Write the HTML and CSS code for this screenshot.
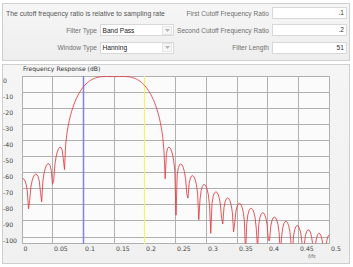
FILE: index.html
```html
<!DOCTYPE html>
<html>
<head>
<meta charset="utf-8">
<title>Filter Designer</title>
<link rel="stylesheet" href="styles.css">
</head>
<body>
<div class="settings">
  <div class="note">The cutoff frequency ratio is relative to sampling rate</div>
  <div class="lbl">First Cutoff Frequency Ratio</div>
  <div class="field">.1</div>

  <div class="lbl">Filter Type</div>
  <div class="select"><span class="val">Band Pass</span><span class="btn"><svg width="5" height="3" viewBox="0 0 5 3"><path d="M0 0H5L2.5 3Z" fill="#b4b4b4"/></svg></span></div>
  <div class="lbl">Second Cutoff Frequency Ratio</div>
  <div class="field">.2</div>

  <div class="lbl">Window Type</div>
  <div class="select"><span class="val">Hanning</span><span class="btn"><svg width="5" height="3" viewBox="0 0 5 3"><path d="M0 0H5L2.5 3Z" fill="#b4b4b4"/></svg></span></div>
  <div class="lbl">Filter Length</div>
  <div class="field">51</div>
</div>

<div class="chart">
  <div class="chart-title">Frequency Response (dB)</div>
  <svg class="plot" width="346" height="190" viewBox="3 73 346 190">
    <defs>
      <clipPath id="plotclip"><rect x="22" y="76" width="308" height="167.5"/></clipPath>
    </defs>
    <rect class="plot-bg" x="22" y="76" width="308" height="167.5"/>
    <g class="grid">
      <line x1="22" x2="330" y1="76.5" y2="76.5"/>
      <line x1="22" x2="330" y1="92.5" y2="92.5"/>
      <line x1="22" x2="330" y1="108.5" y2="108.5"/>
      <line x1="22" x2="330" y1="124.5" y2="124.5"/>
      <line x1="22" x2="330" y1="140.5" y2="140.5"/>
      <line x1="22" x2="330" y1="156.5" y2="156.5"/>
      <line x1="22" x2="330" y1="172.5" y2="172.5"/>
      <line x1="22" x2="330" y1="188.5" y2="188.5"/>
      <line x1="22" x2="330" y1="204.5" y2="204.5"/>
      <line x1="22" x2="330" y1="220.5" y2="220.5"/>
      <line x1="22" x2="330" y1="237.5" y2="237.5"/>
      <line x1="22" x2="330" y1="243.5" y2="243.5"/>
      <line x1="22.5" x2="22.5" y1="76" y2="244"/>
      <line x1="52.5" x2="52.5" y1="76" y2="244"/>
      <line x1="83.5" x2="83.5" y1="76" y2="244"/>
      <line x1="114.5" x2="114.5" y1="76" y2="244"/>
      <line x1="144.5" x2="144.5" y1="76" y2="244"/>
      <line x1="175.5" x2="175.5" y1="76" y2="244"/>
      <line x1="206.5" x2="206.5" y1="76" y2="244"/>
      <line x1="237.5" x2="237.5" y1="76" y2="244"/>
      <line x1="267.5" x2="267.5" y1="76" y2="244"/>
      <line x1="298.5" x2="298.5" y1="76" y2="244"/>
      <line x1="329.5" x2="329.5" y1="76" y2="244"/>
    </g>
    <line class="cut1" x1="83.5" x2="83.5" y1="76" y2="244"/>
    <line class="cut2" x1="144.5" x2="144.5" y1="76" y2="244"/>
    <polyline id="curve" class="curve" clip-path="url(#plotclip)" points=""/>
    <g class="ylabels">
      <text x="3" y="82.5">0</text>
      <text x="3" y="98.5">-10</text>
      <text x="3" y="114.5">-20</text>
      <text x="3" y="130.5">-30</text>
      <text x="3" y="146.5">-40</text>
      <text x="3" y="162.5">-50</text>
      <text x="3" y="178.5">-60</text>
      <text x="3" y="194.5">-70</text>
      <text x="3" y="210.5">-80</text>
      <text x="3" y="226.5">-90</text>
      <text x="3" y="243">-100</text>
    </g>
    <g class="xlabels">
      <text x="23.5" y="251">0</text>
      <text x="54" y="251">0.05</text>
      <text x="85" y="251">0.1</text>
      <text x="116" y="251">0.15</text>
      <text x="146" y="251">0.2</text>
      <text x="177" y="251">0.25</text>
      <text x="208" y="251">0.3</text>
      <text x="239" y="251">0.35</text>
      <text x="269" y="251">0.4</text>
      <text x="300" y="251">0.45</text>
      <text x="331" y="251">0.5</text>
    </g>
    <text class="unit" x="308" y="258">f/fs</text>
  </svg>
</div>
<script src="script.js"></script>
</body>
</html>
```

FILE: styles.css
```css
* { box-sizing: border-box; }
html, body { margin: 0; padding: 0; background: #ffffff; }
body {
  width: 353px;
  height: 267px;
  overflow: hidden;
  font-family: "Liberation Sans", Arial, sans-serif;
  font-size: 6.6px;
  color: #666;
}

.settings {
  margin: 3px 3px 0 2px;
  border: 1px solid #cfcfcf;
  background: linear-gradient(#f6f6f6, #eeeeee);
  padding: 3px 3px 6.4px 3px;
  display: grid;
  grid-template-columns: 91px 74px 1fr 75px;
  grid-template-rows: 12px 12px 12px;
  column-gap: 3px;
  row-gap: 5.3px;
  align-items: center;
}

.note {
  grid-column: 1 / 3;
  white-space: nowrap;
  color: #555;
  font-size: 6.85px;
}

.lbl {
  text-align: right;
  white-space: nowrap;
  color: #707070;
}

.field {
  height: 12px;
  background: #fff;
  border: 1px solid #d8d8d8;
  text-align: right;
  padding-right: 2px;
  line-height: 10px;
  color: #333;
}

.select {
  height: 12px;
  background: #fff;
  border: 1px solid #d8d8d8;
  display: flex;
  align-items: center;
  padding-left: 1.5px;
  color: #1a1a1a;
}
.select .val { flex: 1; white-space: nowrap; }
.select .btn {
  width: 10px;
  height: 9px;
  margin-right: 1px;
  border: 1px solid #e4e4e4;
  background: #f7f7f7;
  display: flex;
  align-items: center;
  justify-content: center;
}
.select .btn svg { display: block; }

.chart {
  margin: 3px 3px 0 2px;
  height: 200px;
  border: 1px solid #cfcfcf;
  background: linear-gradient(#f5f5f5, #f0f0f0);
}
.chart-title {
  height: 8px;
  line-height: 8px;
  padding-left: 20px;
  font-family: "DejaVu Sans", Verdana, sans-serif;
  font-size: 6.1px;
  color: #333;
}
.plot { display: block; }
.plot-bg { fill: #fbfbfb; }
.grid line { stroke: #b0b0b0; stroke-width: 1; }
.cut1 { stroke: #8080e6; stroke-width: 1.5; }
.cut2 { stroke: #f3f07a; stroke-width: 1.2; }
.curve { fill: none; stroke: #e23a40; stroke-width: 0.85; stroke-linejoin: round; }
.ylabels text, .xlabels text {
  font-family: "DejaVu Sans", Verdana, sans-serif;
  font-size: 6.2px;
  fill: #444;
}
.unit {
  font-family: "DejaVu Sans", Verdana, sans-serif;
  font-size: 4.8px;
  font-style: italic;
  fill: #555;
}
```

FILE: script.js
```js
(function () {
  var N = 51, M = (N - 1) / 2, f1 = 0.1, f2 = 0.2;
  var h = [];
  function lp(fc, k) {
    return k === 0 ? 2 * fc : Math.sin(2 * Math.PI * fc * k) / (Math.PI * k);
  }
  for (var n = 0; n < N; n++) {
    var k = n - M;
    var w = 0.5 - 0.5 * Math.cos(2 * Math.PI * (n + 1) / (N + 1));
    h.push((lp(f2, k) - lp(f1, k)) * w);
  }
  var K = 256, mags = [];
  for (var i = 0; i <= K; i++) {
    var f = 0.5 * i / K, re = 0, im = 0;
    for (var j = 0; j < N; j++) {
      re += h[j] * Math.cos(2 * Math.PI * f * j);
      im -= h[j] * Math.sin(2 * Math.PI * f * j);
    }
    mags.push(Math.sqrt(re * re + im * im));
  }
  var max = Math.max.apply(null, mags);
  var pts = mags.map(function (m, i) {
    var db = 20 * Math.log10(m / max + 1e-12);
    if (db < -110) db = -110;
    var x = 22.5 + (i / K) * 307;
    var y = 76.5 + (-db) * 1.61;
    return x.toFixed(2) + "," + y.toFixed(2);
  });
  document.getElementById("curve").setAttribute("points", pts.join(" "));
})();
```
